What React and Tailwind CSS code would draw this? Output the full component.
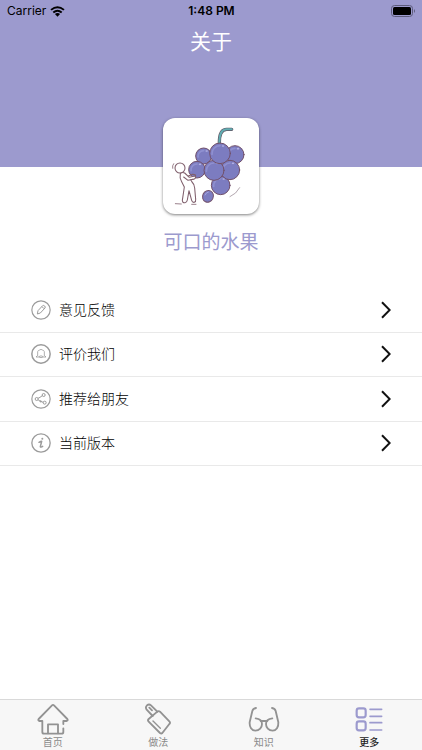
import clsx from "clsx";

const PencilIcon = () => (
  <svg viewBox="0 0 60 60" className="h-5 w-5 shrink-0" fill="none" stroke="#9b9b9b" aria-hidden="true">
    <circle cx="30" cy="30" r="27.5" strokeWidth="3.5" />
    <path
      d="M19 42l2-10 14-15q3-2 6 1t1 6L28 39zM33 20l6 6"
      strokeWidth="3"
      strokeLinejoin="round"
    />
  </svg>
);

const BellIcon = () => (
  <svg viewBox="0 0 60 60" className="h-5 w-5 shrink-0" fill="none" stroke="#9b9b9b" aria-hidden="true">
    <circle cx="30" cy="30" r="27.5" strokeWidth="4.5" />
    <path
      d="M20 35V23q1-4 6-5 4-4 8 0 5 1 6 5v12M20 34l-5 5h8q7 4 14 0h8l-5-5M23 38q7-5 14 0"
      strokeWidth="2.4"
      strokeLinejoin="round"
    />
  </svg>
);

const ShareIcon = () => (
  <svg viewBox="0 0 60 60" className="h-5 w-5 shrink-0" fill="none" stroke="#9b9b9b" aria-hidden="true">
    <circle cx="30" cy="30" r="27.5" strokeWidth="3.5" />
    <g strokeWidth="3">
      <circle cx="17" cy="30" r="4.5" />
      <circle cx="38" cy="18" r="4.5" />
      <circle cx="41" cy="41" r="4.5" />
      <path d="M21 28l6-3 7-5M21 32l7 5 9 3" />
      <circle cx="29" cy="37" r="2" />
    </g>
  </svg>
);

const InfoIcon = () => (
  <svg viewBox="0 0 60 60" className="h-5 w-5 shrink-0" fill="none" stroke="#9b9b9b" aria-hidden="true">
    <circle cx="30" cy="30" r="27.5" strokeWidth="4" />
    <circle cx="34" cy="17" r="3" fill="#9b9b9b" stroke="none" />
    <path d="M24 28q5-3 8-3l-4 16q1 3 7-1" strokeWidth="4.5" strokeLinecap="round" strokeLinejoin="round" />
  </svg>
);

const ChevronIcon = () => (
  <svg viewBox="0 0 10 18" className="h-[18px] w-[10px]" fill="none" stroke="#111" strokeWidth="2" aria-hidden="true">
    <path d="M1 1.2L8.7 9 1 16.8" />
  </svg>
);

const HomeIcon = () => (
  <svg viewBox="0 0 96 96" className="h-8 w-8" fill="none" stroke="currentColor" strokeWidth="5.5" strokeLinecap="round" strokeLinejoin="round" aria-hidden="true">
    <path d="M79 63V54h10q5-2 2-6L51 7q-3-3-6 0L5 48q-3 5 2 6h9v33q0 5 5 5h53q5 0 5-5V76" />
    <path d="M33 91V64h30v27" />
  </svg>
);

const CleaverIcon = () => (
  <svg viewBox="0 0 96 96" className="h-8 w-8" fill="none" stroke="currentColor" strokeWidth="5.5" strokeLinecap="round" strokeLinejoin="round" aria-hidden="true">
    <path d="M15 7q6-5 12 0l19 19M15 7q-6 6-1 13l18 19M22 14l8 8" />
    <path d="M46 26q4-3 8 0l28 29q4 4 0 8L61 90q-3 3-7 0L20 56q-4-4 0-8z" />
    <path d="M33 54l22 22" strokeWidth="4" />
  </svg>
);

const GlassesIcon = () => (
  <svg viewBox="0 0 96 96" className="h-8 w-8" fill="none" stroke="currentColor" strokeWidth="5.5" strokeLinecap="round" strokeLinejoin="round" aria-hidden="true">
    <path d="M24 15q-9 2-11 9L5 58c-1 14 6 25 17 25 12 0 20-9 20-20 0-10-8-16-19-17" />
    <path d="M72 15q9 2 11 9l8 34c1 14-6 25-17 25-12 0-20-9-20-20 0-10 8-16 19-17" />
    <path d="M38 54h20" />
  </svg>
);

const MoreIcon = () => (
  <svg viewBox="0 0 96 96" className="h-8 w-8" fill="none" stroke="currentColor" strokeWidth="6.5" strokeLinecap="round" aria-hidden="true">
    <rect x="11" y="16" width="27" height="27" rx="7" />
    <rect x="11" y="55" width="27" height="27" rx="7" />
    <path d="M51 19h35M51 40h35M51 59h35M51 81h35" strokeWidth="5" />
  </svg>
);

const grapes = [
  [161, 143, 24],
  [255, 139, 27],
  [212, 231, 28],
  [240, 185, 29],
  [141, 184, 25],
  [192, 186, 30],
  [210, 135, 31],
];

const GrapeLogo = () => (
  <svg viewBox="39 29 288 288" className="h-full w-full" fill="none" strokeLinecap="round" strokeLinejoin="round" role="img" aria-label="葡萄">
    <path d="M208 103c0-24 7-40 22-40h15" stroke="#5f5361" strokeWidth="10" />
    <path d="M208 103c0-24 7-40 22-40h15" stroke="#61adb2" strokeWidth="6" />
    {grapes.map(([x, y, r]) => (
      <g key={`${x}-${y}`}>
        <circle cx={x} cy={y} r={r} fill="#7c7cc0" stroke="#71506a" strokeWidth="3" />
        <path
          d={`M${x - r + 7} ${y + 3}a${r - 7} ${r - 7} 0 0 1 ${r - 7} ${-r + 5}`}
          stroke="#8f90d0"
          strokeWidth="5"
        />
        <ellipse cx={x + 9} cy={y - r + 9} rx="4" ry="2.5" fill="#b4b3e4" />
      </g>
    ))}
    <ellipse cx="174" cy="264" rx="16" ry="18" fill="#7c7cc0" stroke="#71506a" strokeWidth="3" transform="rotate(25 174 264)" />
    <path d="M165 260q3-8 10-9" stroke="#a5a5df" strokeWidth="3" />
    <g stroke="#80606d" strokeWidth="3.2">
      <circle cx="90" cy="179" r="15" fill="#fff" />
      <path
        d="M91 196q-3 12 4 24l8 16-6 40q0 8 8 7 6-1 7-8l5-28 8 29q2 7 8 6 5-2 4-9l-3-34q-1-12-8-18l-4-7 11-2q6-4 2-9l-17 4-14-13q-7-4-13 2z"
        fill="#fff"
      />
      <path d="M101 206l13 10 16-3M115 203l13-5q9 0 9 5" />
      <path d="M68 180q-2-8 3-14" strokeWidth="2.4" />
      <path d="M76 286l18 1M125 288h13" strokeWidth="2.4" />
      <path d="M240 265q19-8 29-27" stroke="#a0909a" strokeWidth="2.4" />
    </g>
  </svg>
);

const WifiIcon = () => (
  <svg viewBox="0 0 46 34" className="h-[11px] w-[15px]" fill="none" stroke="#000" strokeWidth="6" aria-hidden="true">
    <path d="M3 12q20-17 40 0M10 20q13-11 26 0" />
    <path d="M15 25q8-6 16 0l-8 8z" fill="#000" stroke="none" />
  </svg>
);

const BatteryIcon = () => (
  <svg viewBox="0 0 25 12" className="h-3 w-[25px]" aria-hidden="true">
    <rect x="0.5" y="0.5" width="21" height="11" rx="3" fill="none" stroke="#5d5c7c" />
    <rect x="2" y="2" width="18" height="8" rx="1.5" fill="#000" />
    <path d="M23 4q2 2 0 4z" fill="#5d5c7c" />
  </svg>
);

const rows = [
  { label: "意见反馈", Icon: PencilIcon },
  { label: "评价我们", Icon: BellIcon },
  { label: "推荐给朋友", Icon: ShareIcon },
  { label: "当前版本", Icon: InfoIcon },
];

const tabs = [
  { label: "首页", Icon: HomeIcon },
  { label: "做法", Icon: CleaverIcon },
  { label: "知识", Icon: GlassesIcon },
  { label: "更多", Icon: MoreIcon, active: true },
];

const StatusBar = () => (
  <div className="grid h-[22px] grid-cols-3 items-center pr-1.5 pl-[7px] text-xs text-black">
    <div className="flex items-center gap-1">
      <span>Carrier</span>
      <WifiIcon />
    </div>
    <span className="text-center font-semibold">1:48 PM</span>
    <div className="flex justify-end">
      <BatteryIcon />
    </div>
  </div>
);

const App = () => {
  return (
    <div className="flex min-h-screen flex-col bg-white font-['Inter','Noto_Sans_CJK_SC',sans-serif]">
      <header className="h-[167px] bg-[#9c9ace]">
        <StatusBar />
        <h1 className="text-center text-[21px] leading-10 text-white">关于</h1>
      </header>

      <main className="flex flex-1 flex-col">
        <div className="-mt-[49px] flex flex-col items-center">
          <div className="h-24 w-24 overflow-hidden rounded-xl bg-white shadow-[0_1px_3px_rgba(0,0,0,0.5)]">
            <GrapeLogo />
          </div>
          <p className="mt-3 text-[19px] leading-[34px] text-[#9c9ace]">可口的水果</p>
        </div>

        <ul className="mt-7 grid h-[178px] grid-rows-4">
          {rows.map(({ label, Icon }) => (
            <li key={label} className="border-b border-[#e9e9e9]">
              <button type="button" className="flex h-full w-full items-center pr-[31px] pl-[31px] text-left">
                <Icon />
                <span className="ml-2 flex-1 text-[14px] leading-5 font-light text-black">{label}</span>
                <ChevronIcon />
              </button>
            </li>
          ))}
        </ul>
      </main>

      <nav className="grid h-[51px] grid-cols-4 border-t border-[#d9d9d9] bg-[#f7f7f7]">
        {tabs.map(({ label, Icon, active }) => (
          <a
            key={label}
            href="#"
            aria-current={active ? "page" : undefined}
            className="flex flex-col items-center pt-[3px]"
          >
            <span className={clsx(active ? "text-[#9c9ace]" : "text-[#929292]")}>
              <Icon />
            </span>
            <span
              className={clsx(
                "text-[10px] leading-[14px]",
                active ? "font-medium text-[#222]" : "text-[#8a8a8a]"
              )}
            >
              {label}
            </span>
          </a>
        ))}
      </nav>
    </div>
  );
};

export default App;
